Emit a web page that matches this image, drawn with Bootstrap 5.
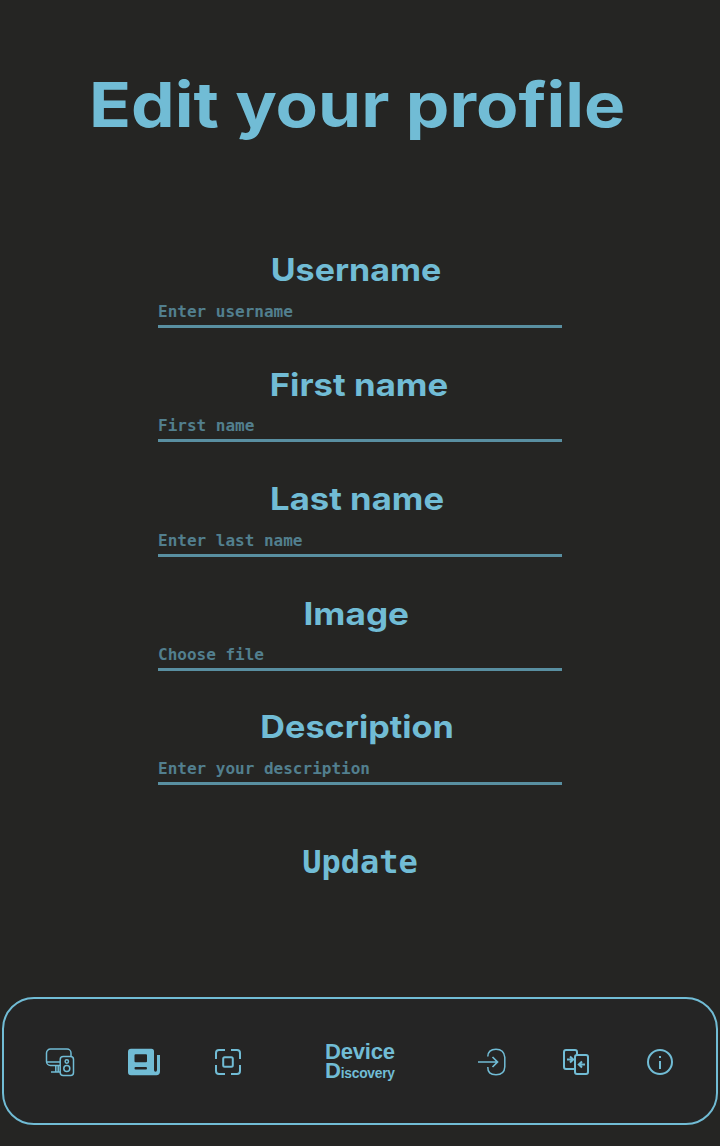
<!DOCTYPE html>
<html lang="en">
<head>
<meta charset="utf-8">
<meta name="viewport" content="width=device-width, initial-scale=1">
<title>Edit your profile</title>
<link href="https://cdn.jsdelivr.net/npm/bootstrap@5.3.0/dist/css/bootstrap.min.css" rel="stylesheet">
<style>
  :root { --sky: #71bcd5; --sky-dim: #598fa1; }
  body { background: #252523; color: var(--sky); font-family: Inter, sans-serif; height: 1146px; overflow: hidden; }
  .page-title { font-size: 62px; line-height: 76px; padding-top: 67px; height: 233px; white-space: nowrap; margin-right: 5px; }
  .wide { display: inline-block; transform: scaleX(var(--stretch, 1.1)); }
  .page-title .wide { --stretch: 1.117; }
  .profile-form { width: 404px; height: 764px; }
  .field { height: 114.3px; padding-top: 17px; }
  .field-label { font-size: 31.5px; line-height: 40px; height: 48px; white-space: nowrap; margin-right: 6px; }
  .field-label[for="username"] { margin-right: 8px; --stretch: 1.08; }
  .field-label[for="first"] { margin-right: 2px; line-height: 42px; --stretch: 1.103; }
  .field-label[for="last"] { margin-right: 5px; --stretch: 1.1; }
  .field-label[for="image"] { margin-right: 7px; line-height: 42px; --stretch: 1.117; }
  .field-label[for="description"] { --stretch: 1.086; }
  .field .form-control { height: 30px; border-bottom: 3px solid var(--sky-dim) !important; font: bold 16px/24px "DejaVu Sans Mono", monospace; color: var(--sky); }
  .field .form-control::placeholder { color: #527f8e; opacity: 1; }
  .btn-update { font: bold 32px/40px "DejaVu Sans Mono", monospace; color: var(--sky); margin-top: 38px; }
  .dock { height: 128px; margin: 0 2px; border: 2px solid var(--sky); border-radius: 32px; background: #252525; padding: 2px 40px 0; }
  .dock-group { gap: 52px; }
  .dock a { color: var(--sky); line-height: 0; }
  .dock svg { width: 32px; height: 32px; fill: none; stroke: currentColor; stroke-width: 2; }
  .brand { font-family: "Liberation Sans", Arial, sans-serif; font-weight: bold; width: 70px; margin-top: -1px; }
  .brand-line { height: 18.5px; line-height: 18.5px; font-size: 22px; white-space: nowrap; letter-spacing: -.2px; }
  .brand-rest { font-size: 13.8px; letter-spacing: -.25px; }
</style>
</head>
<body>
<main class="d-flex flex-column align-items-center">
  <h1 class="page-title fw-bold mb-0"><span class="wide">Edit your profile</span></h1>
  <form class="profile-form">
    <div class="field"><label class="field-label d-block text-center fw-bold" for="username"><span class="wide">Username</span></label>
      <input id="username" class="form-control bg-transparent border-0 rounded-0 p-0" placeholder="Enter username"></div>
    <div class="field"><label class="field-label d-block text-center fw-bold" for="first"><span class="wide">First name</span></label>
      <input id="first" class="form-control bg-transparent border-0 rounded-0 p-0" placeholder="First name"></div>
    <div class="field"><label class="field-label d-block text-center fw-bold" for="last"><span class="wide">Last name</span></label>
      <input id="last" class="form-control bg-transparent border-0 rounded-0 p-0" placeholder="Enter last name"></div>
    <div class="field"><label class="field-label d-block text-center fw-bold" for="image"><span class="wide">Image</span></label>
      <input id="image" class="form-control bg-transparent border-0 rounded-0 p-0" placeholder="Choose file"></div>
    <div class="field"><label class="field-label d-block text-center fw-bold" for="description"><span class="wide">Description</span></label>
      <input id="description" class="form-control bg-transparent border-0 rounded-0 p-0" placeholder="Enter your description"></div>
    <div class="text-center"><button type="button" class="btn btn-update border-0 p-0">Update</button></div>
  </form>
</main>
<nav class="dock d-flex align-items-center justify-content-between">
  <div class="dock-group d-flex">
    <a href="#" aria-label="Devices"><svg viewBox="0 0 32 32"><g stroke-width="1.5"><path d="M16 19.500H6.500a4 4 0 0 1-4-4v-8.500a4 4 0 0 1 4-4H23a4 4 0 0 1 4 4v3.500M2.500 16H16M11.800 20v5.500M14.200 20v5.500M7 26h9"/><rect x="16.200" y="10.500" width="13.300" height="19" rx="3"/><circle cx="22.800" cy="15.500" r="1.700"/><circle cx="22.800" cy="22.500" r="3"/></g></svg></a>
    <a href="#" aria-label="News"><svg viewBox="0 0 32 32"><path fill="currentColor" fill-rule="evenodd" stroke="none" d="M3 2.700h20.500Q26 2.700 26 5.200V24q0 1.800 1.500 1.800T29 24V9H32v16.500q0 3.700-3.700 3.700H3q-3 0-3-3V5.700q0-3 3-3zM7.500 8.200q-1 0-1 1v6q0 1 1 1H18q1 0 1-1v-6q0-1-1-1zM7.500 21q-1 0-1 1.200t1 1.200H18q1 0 1-1.200T18 21z"/></svg></a>
    <a href="#" aria-label="Scan"><svg viewBox="0 0 32 32"><path d="M4 13V7a3 3 0 0 1 3-3h6M19 4h6a3 3 0 0 1 3 3v6M28 19v6a3 3 0 0 1-3 3h-6M13 28H7a3 3 0 0 1-3-3v-6"/><rect x="11.200" y="11.200" width="9.600" height="9.600" rx="1.500"/></svg></a>
  </div>
  <a href="#" class="brand text-decoration-none"><div class="brand-line">Device</div><div class="brand-line">D<span class="brand-rest">iscovery</span></div></a>
  <div class="dock-group d-flex">
    <a href="#" aria-label="Log in"><svg viewBox="0 0 32 32"><path stroke-width="1.500" d="M11.800 10.500Q12 3.200 20 3.200t8.800 8v9.600Q28.500 28.800 20 28.800t-8.200-7.800"/><path stroke-width="1.700" d="M2 16h19.500M16.500 11l5 5-5 5"/></svg></a>
    <a href="#" aria-label="Transfer"><svg viewBox="0 0 32 32"><path d="M14 23H6a2 2 0 0 1-2-2V6a2 2 0 0 1 2-2h9a2 2 0 0 1 2 2v3"/><rect x="15" y="9" width="13" height="19" rx="2"/><path d="M7 13.500h6M10 10.500l3.200 3-3.200 3M25 18.500h-6M22 15.500l-3.200 3 3.200 3"/></svg></a>
    <a href="#" aria-label="About"><svg viewBox="0 0 32 32"><circle cx="16" cy="16" r="12"/><path d="M16 15v8M16 10v2"/></svg></a>
  </div>
</nav>
<script src="https://cdn.jsdelivr.net/npm/bootstrap@5.3.0/dist/js/bootstrap.bundle.min.js"></script>
</body>
</html>
